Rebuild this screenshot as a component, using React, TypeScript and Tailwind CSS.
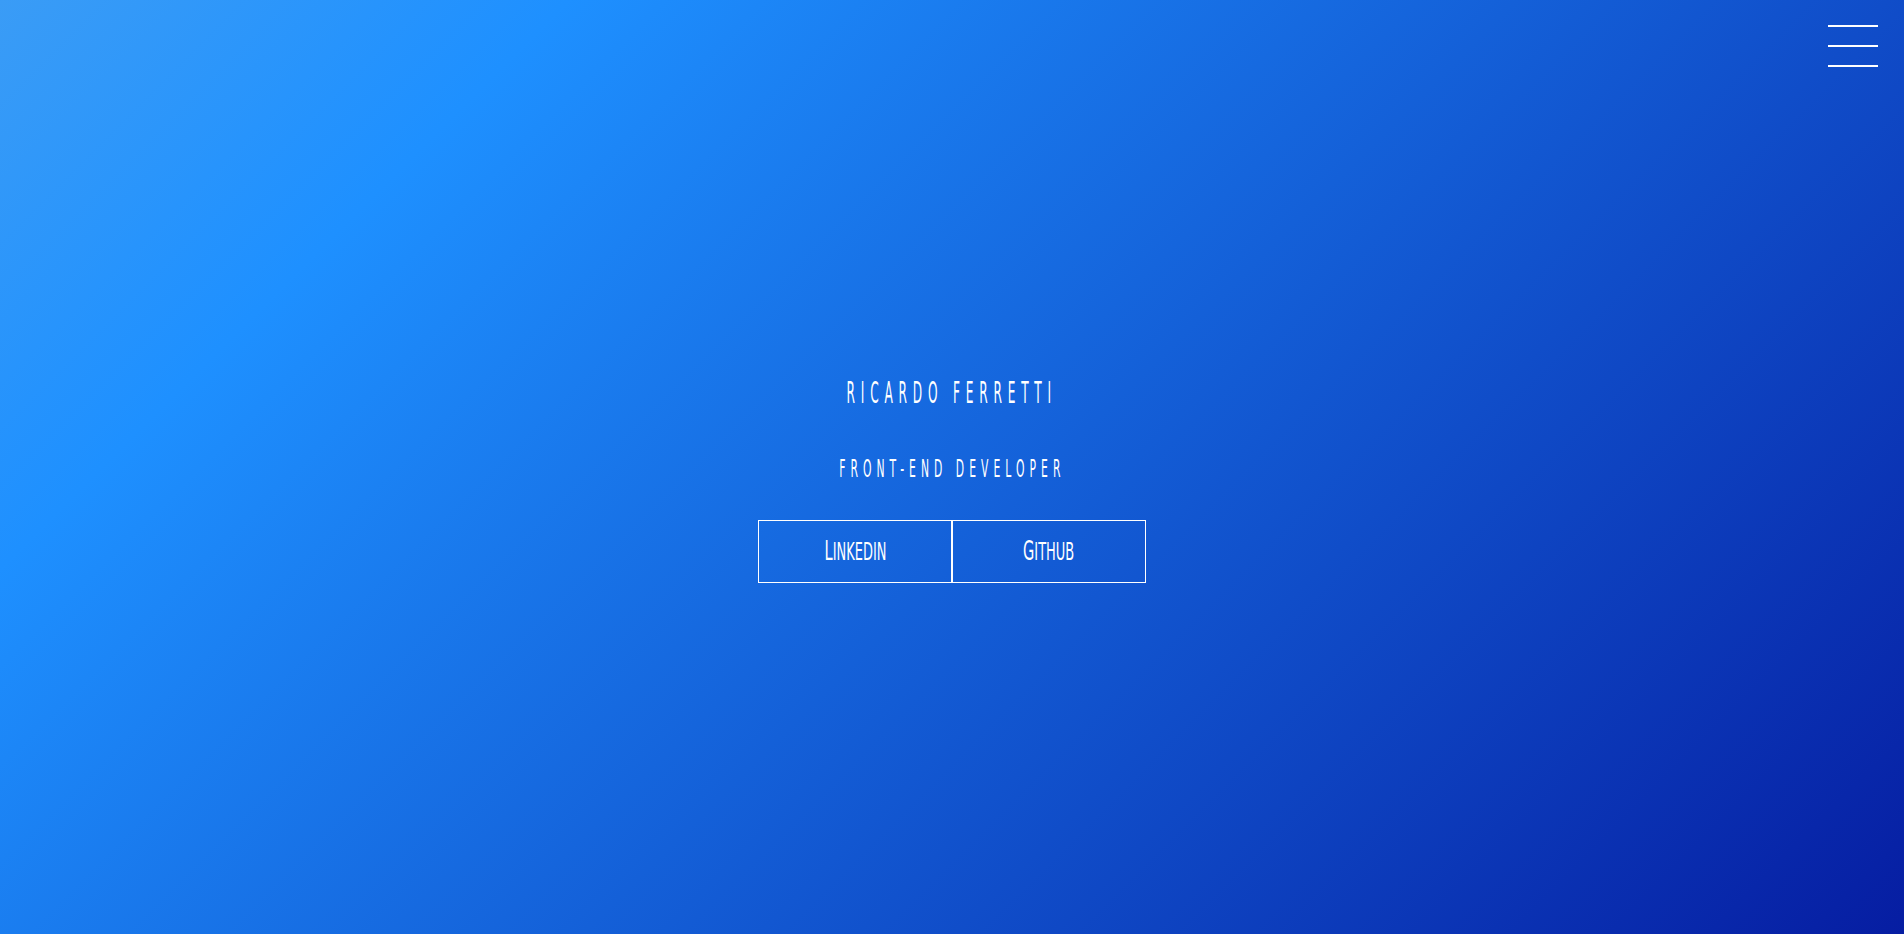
export default function App() {
  return (
    <div
      className="relative flex h-screen w-full flex-col items-center justify-center overflow-hidden bg-[linear-gradient(135deg,#3a9cf6_0%,#1e90ff_20%,#061da2_100%)] pt-[26px] text-white"
      style={{ fontFamily: '"Liberation Sans Narrow", "DejaVu Sans Condensed", "Liberation Sans", sans-serif' }}
    >
      <button className="absolute right-[26px] top-[25px] flex w-[50px] flex-col gap-[18px]" aria-label="menu">
        <span className="block h-[2px] w-full bg-white" />
        <span className="block h-[2px] w-full bg-white" />
        <span className="block h-[2px] w-full bg-white" />
      </button>

      <h1 className="inline-block scale-x-[0.45] text-[30px] leading-[30px] tracking-[0.43em]">RICARDO FERRETTI</h1>
      <h2 className="mt-[49px] inline-block scale-x-[0.5] text-[24px] leading-[24px] tracking-[0.42em]">FRONT-END DEVELOPER</h2>

      <div className="mt-[39px] flex">
        <a href="#" className="flex h-[63px] w-[194px] items-center justify-center border border-white">
          <span className="inline-block scale-x-[0.6] text-[24px] uppercase first-letter:text-[27px]">Linkedin</span>
        </a>
        <a href="#" className="flex h-[63px] w-[194px] items-center justify-center border border-white">
          <span className="inline-block scale-x-[0.6] text-[24px] uppercase first-letter:text-[27px]">Github</span>
        </a>
      </div>
    </div>
  );
}
